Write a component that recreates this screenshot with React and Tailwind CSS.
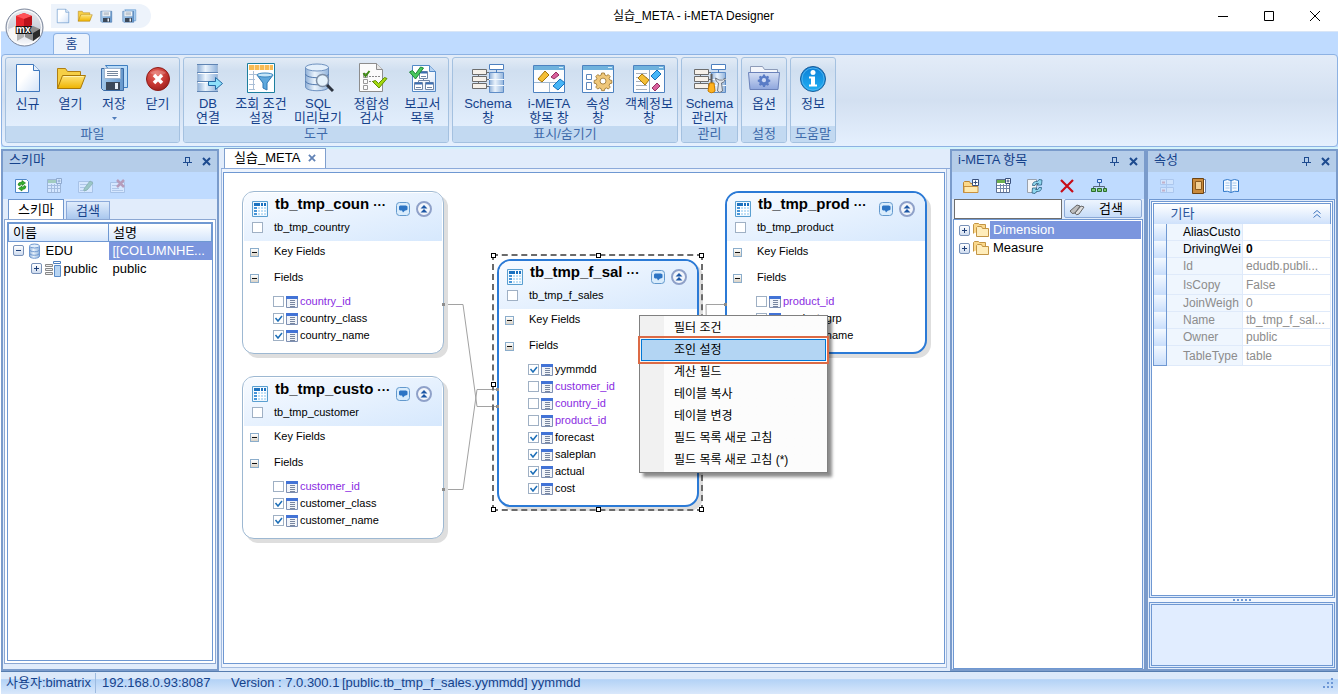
import React from 'react';

/* ---------- shared icon pieces ---------- */

function Svg({ size = 16, box, className = '', children }) {
  return (
    <svg width={size} height={size} viewBox={box || `0 0 ${size} ${size}`} className={`shrink-0 ${className}`} fill="none" aria-hidden="true">
      {children}
    </svg>
  );
}

function Gradients() {
  return (
    <svg width="0" height="0" className="absolute" aria-hidden="true">
      <defs>
        <linearGradient id="paper" x1="0" y1="0" x2="1" y2="1">
          <stop offset="0.4" stopColor="#ffffff" />
          <stop offset="1" stopColor="#d3e3f8" />
        </linearGradient>
        <linearGradient id="folder" x1="0" y1="0" x2="0" y2="1">
          <stop offset="0" stopColor="#ffe57a" />
          <stop offset="1" stopColor="#eeb300" />
        </linearGradient>
        <linearGradient id="disk" x1="0" y1="0" x2="1" y2="0">
          <stop offset="0" stopColor="#a4c9ea" />
          <stop offset="1" stopColor="#6496cb" />
        </linearGradient>
        <linearGradient id="cyl" x1="0" y1="0" x2="1" y2="0">
          <stop offset="0" stopColor="#8fb0d8" />
          <stop offset="0.4" stopColor="#eaf3fc" />
          <stop offset="1" stopColor="#92b4dc" />
        </linearGradient>
        <radialGradient id="red" cx="0.4" cy="0.3" r="0.8">
          <stop offset="0" stopColor="#e8695e" />
          <stop offset="0.6" stopColor="#c23430" />
          <stop offset="1" stopColor="#8e1c19" />
        </radialGradient>
        <linearGradient id="info" x1="0" y1="0" x2="0" y2="1">
          <stop offset="0" stopColor="#0d7ed6" />
          <stop offset="1" stopColor="#1fb1f5" />
        </linearGradient>
        <linearGradient id="optFolder" x1="0" y1="0" x2="0" y2="1">
          <stop offset="0" stopColor="#d5dff4" />
          <stop offset="1" stopColor="#8ea6dd" />
        </linearGradient>
        <linearGradient id="orb" x1="0" y1="0" x2="0" y2="1">
          <stop offset="0" stopColor="#e9ebef" />
          <stop offset="0.5" stopColor="#cdd2dc" />
          <stop offset="1" stopColor="#fbfcff" />
        </linearGradient>
      </defs>
    </svg>
  );
}

const GEAR = 'M-1.6-9h3.2l.6 2.4 1.9.8 2.1-1.3 2.3 2.3-1.3 2.1.8 1.9 2.4.6v3.2l-2.4.6-.8 1.9 1.3 2.1-2.3 2.3-2.1-1.3-1.9.8-.6 2.4h-3.2l-.6-2.4-1.9-.8-2.1 1.3-2.3-2.3 1.3-2.1-.8-1.9-2.4-.6v-3.2l2.4-.6.8-1.9-1.3-2.1 2.3-2.3 2.1 1.3 1.9-.8z';

/* ---------- ribbon icons, 32 x 32 ---------- */

const NewIcon = ({ size = 32 }) => (
  <Svg size={size} box="0 0 32 32">
    <path d="M4.500 2.500h17l6 6v21h-23z" fill="url(#paper)" stroke="#3f78bd" />
    <path d="M21.500 2.500v6h6" fill="#e4effc" stroke="#3f78bd" />
  </Svg>
);

const OpenIcon = ({ size = 32 }) => (
  <Svg size={size} box="0 0 32 32">
    <path d="M2.500 26.500v-20h8l2 3h13v5" fill="#f6cf45" stroke="#b07f14" />
    <path d="M2.500 26.500l5-13h23l-5 13z" fill="url(#folder)" stroke="#a87808" />
    <path d="M8.500 14.500h20" stroke="#fff3b0" />
  </Svg>
);

const SaveIcon = ({ size = 32, stacked = true }) => (
  <Svg size={size} box="0 0 32 32">
    {stacked && <path d="M7.500 3.500h22v22h-4z" fill="#b9dbf8" stroke="#3f7fc1" />}
    <path d="M3.500 6.500h22v22h-20l-2-2z" fill="url(#disk)" stroke="#3a6aa5" />
    <path d="M6.500 6.500h16v10h-16z" fill="#fff" stroke="#9db4cf" />
    <path d="M9 9.500h11M9 11.500h11M9 13.500h11" stroke="#76889d" />
    <path d="M8 20h14v8H8z" fill="#3c4858" />
    <path d="M17 21h3v6h-3z" fill="#e9f0f8" />
  </Svg>
);

const CloseIcon = () => (
  <Svg size={32}>
    <circle cx="16" cy="17" r="11.500" fill="url(#red)" stroke="#8f1c18" />
    <path d="M8 11a10 7 0 0 1 16 0q-8 5-16 0z" fill="#fff" opacity=".22" />
    <path d="M12 13l8 8M20 13l-8 8" stroke="#fff" strokeWidth="3.500" />
  </Svg>
);

const DbLinkIcon = () => (
  <Svg size={32}>
    <path d="M5.500 2.500h20v27h-20z" fill="url(#cyl)" stroke="#a5bbd6" />
    <path d="M5 10.500h21M5 19.500h21M5 29.500h21M5 2.500h21" stroke="#5f84b3" />
    <path d="M6 11.500h20M6 20.500h20" stroke="#fff" />
    <path d="M16.500 19.500h7v-4l7 6-7 6v-4h-7z" fill="#8ee0fa" stroke="#256aa5" />
  </Svg>
);

const FilterIcon = () => (
  <Svg size={32}>
    <path d="M2.500 1.500h27v29h-27z" fill="#fff" stroke="#1c7f9e" />
    <path d="M4 3h24v5H4z" fill="#f7bb55" />
    <path d="M9.500 3v5M14.500 3v5M19.500 3v5M24.500 3v5" stroke="#fbe2b4" />
    <path d="M8.500 9v19M4 12.500h8M4 17.500h6M4 22.500h6M4 27.500h6" stroke="#a9bed6" />
    <path d="M12 13h16l-6 8v7l-4-2v-5z" fill="#5fa8dc" stroke="#2f78b4" />
    <ellipse cx="20" cy="13" rx="8" ry="2" fill="#c6e6f8" stroke="#3a86bf" />
  </Svg>
);

const SqlIcon = () => (
  <Svg size={32}>
    <path d="M3.500 5v20c0 5 23 5 23 0V5" fill="url(#cyl)" stroke="#6f92c0" />
    <ellipse cx="15" cy="5.500" rx="11.500" ry="3.500" fill="#e3effb" stroke="#6f92c0" />
    <path d="M3.500 12c0 5 23 5 23 0M3.500 19c0 5 23 5 23 0" stroke="#5279ae" />
    <circle cx="20.500" cy="18.500" r="6" fill="#e5f2fc" stroke="#7e8fa5" strokeWidth="1.500" />
    <path d="M25 23l6 6" stroke="#2d3440" strokeWidth="3" />
  </Svg>
);

const CheckDocIcon = () => (
  <Svg size={32}>
    <path d="M3.500 1.500h17l6 6v22h-23z" fill="#fbfbfb" stroke="#8d8d8d" />
    <path d="M20.500 1.500v6h6" fill="#e6e6e6" stroke="#8d8d8d" />
    <path d="M7.500 11.500h4v4h-4zM7.500 17.500h4v4h-4zM7.500 23.500h4v4h-4z" stroke="#999" />
    <path d="M13 14.500h11M13 19.500h6" stroke="#888" strokeDasharray="2 1" />
    <path d="M7.500 11l2 3 4-5" stroke="#3f8a14" strokeWidth="2" />
    <path d="M16.500 19.500l3-1 3 3 6-6 2.500 1-8 9.500z" fill="#a4d80f" stroke="#5d8f00" />
  </Svg>
);

const ReportIcon = () => (
  <Svg size={32}>
    <path d="M5.500 3.500h17l6 6v20h-23z" fill="url(#paper)" stroke="#5289c7" />
    <path d="M22.500 3.500v6h6" fill="#b5d2f2" stroke="#5289c7" />
    <path d="M12.500 9.500h8v7h-8zM7.500 20.500h8v7h-8zM18.500 20.500h8v7h-8z" fill="#fff" stroke="#6f86a6" />
    <path d="M13 10.500h7M8 21.500h7M19 21.500h7" stroke="#3c6eb1" strokeWidth="2" />
    <path d="M16.500 17v2M11.500 20v-1.500h11V20M14 14.500h5M9 25.500h5M20 25.500h5" stroke="#6f86a6" />
    <path d="M2.500 10l3-1.500L8.500 12l5-7 3 1-8 11z" fill="#48c75d" stroke="#1d8635" />
  </Svg>
);

function SchemaShape() {
  return (
    <>
      <path d="M18.500 10.500h14v20h-14z" fill="url(#cyl)" stroke="#5f8dc7" />
      <path d="M18 17.500h15M18 23.500h15" stroke="#f4faff" />
      <path d="M18.500 2.500h14v5h-14z" fill="#fff" stroke="#4c7fbf" />
      <path d="M25.500 8v3" stroke="#4c7fbf" />
      <path d="M1.500 7.500h14v5h-14zM1.500 14.500h14v5h-14zM1.500 21.500h14v5h-14z" fill="#f6f1ea" stroke="#6d6d6d" />
      <path d="M7.500 13v1M7.500 20v1M16 10.500h2M16 17.500h2M16 24.500h2" stroke="#6d6d6d" />
    </>
  );
}

const SchemaIcon = () => (
  <svg width="34" height="32" viewBox="0 0 34 32" fill="none" aria-hidden="true"><SchemaShape /></svg>
);

const SchemaToolsIcon = () => (
  <svg width="34" height="32" viewBox="0 0 34 32" fill="none" aria-hidden="true">
    <SchemaShape />
    <path d="M18.500 12v9" stroke="#5e5e5e" strokeWidth="2" />
    <path d="M16.500 21h4.500l1 8q-3.500 3.500-7 0z" fill="#ffb21e" stroke="#c77b00" />
    <path d="M22.500 16q0 4 3 5l-1 8q2 3 5 0l-1-8q4-1 3.500-5l-2.500 2h-3.500z" fill="#e2e5ea" stroke="#6b7480" />
  </svg>
);

function WindowShape() {
  return (
    <>
      <path d="M.500 3.500h31v27H.500z" fill="#fdfdfe" stroke="#4d82c0" />
      <path d="M1 4h30v4H1z" fill="#6fb2dd" />
      <path d="M26 5.500h4" stroke="#d8ecfb" />
    </>
  );
}

const ItemsIcon = () => (
  <Svg size={32}>
    <WindowShape />
    <path d="M1 20.500h30M16.500 21v9" stroke="#9eb6cf" />
    <path d="M5 17l7-8 4 4-7 7z" fill="#f5bf35" stroke="#a3750c" />
    <path d="M18 15l5-5 3 3-5 4z" fill="#d85f9c" stroke="#923262" />
    <path d="M20 24l7-7 5 4-7 7z" fill="#46b5f7" stroke="#1571ba" />
  </Svg>
);

const PropsIcon = () => (
  <Svg size={32}>
    <WindowShape />
    <path d="M4.500 12.500h5v5h-5zM4.500 20.500h5v7h-5z" fill="#fff" stroke="#5d86ba" />
    <g transform="translate(21 19.500) scale(.85)">
      <path d={GEAR} transform="translate(0 -1)" fill="#efc77a" stroke="#9c7632" />
      <circle r="3.500" cy="-.500" fill="#fff" stroke="#9c7632" />
    </g>
  </Svg>
);

const ObjectIcon = () => (
  <Svg size={32}>
    <WindowShape />
    <path d="M16.500 8v22" stroke="#8fa9c4" />
    <path d="M3 11.500h11M3 15.500h11M3 19.500h11M3 23.500h11M3 27.500h11" stroke="#a8b0ba" />
    <path d="M5 16l4-4 7 6-4 5z" fill="#f5bf35" stroke="#a3750c" />
    <path d="M18 14l6-6 4 4-6 6z" fill="#46b5f7" stroke="#1571ba" />
    <path d="M19 26l5-5 3 3-5 5z" fill="#d85f9c" stroke="#923262" />
  </Svg>
);

const OptionIcon = () => (
  <Svg size={32}>
    <path d="M2.500 27V4.500h12l2 3h13V27" fill="#f4f6fb" stroke="#8d9bb8" />
    <path d="M.500 10.500h31l-1.500 17H2z" fill="url(#optFolder)" stroke="#6b82ba" />
    <g transform="translate(16 18.500) scale(.6)">
      <path d={GEAR} transform="translate(0 -1)" fill="#5a7cc6" />
      <circle r="3.500" cy="-.500" fill="#cfdbf5" />
    </g>
  </Svg>
);

const InfoIcon = () => (
  <Svg size={32}>
    <circle cx="16" cy="17" r="12.500" fill="url(#info)" stroke="#1a5c99" />
    <circle cx="16" cy="17" r="11" stroke="#4fb2ee" />
    <circle cx="16" cy="10.500" r="2.500" fill="#fff" />
    <path d="M12 14.500h6v8h2v2h-8v-2h2v-6h-2z" fill="#fff" />
  </Svg>
);

/* ---------- small icons ---------- */

const PinIcon = () => (
  <Svg size={9}>
    <path d="M2.500 0v5M1.500.500h5M6 0v5M0 5.500h9M4.500 6v3" stroke="#1e4b8f" shapeRendering="crispEdges" />
  </Svg>
);

const CrossIcon = ({ color = '#1e4b8f', size = 9 }) => (
  <Svg size={size} box="0 0 9 9">
    <path d="M1 1l7 7M8 1L1 8" stroke={color} strokeWidth="2" />
  </Svg>
);

const RefreshIcon = () => (
  <Svg>
    <path d="M1.500 1.500h11l2 2v11h-13z" fill="#fff" stroke="#4f87c9" />
    <path d="M4 7q0-3 4-3l0-1.500L11.500 5 8 7.500V6Q6 6 6 8z" fill="#35b22e" stroke="#167512" strokeWidth=".600" />
    <path d="M12 8.500q0 3-4 3V13l-3.500-2.500L8 8v1.500q2 0 2-2z" fill="#35b22e" stroke="#167512" strokeWidth=".600" />
  </Svg>
);

const CalcIcon = () => (
  <Svg>
    <path d="M1.500 1.500h13v13h-13z" fill="#fff" stroke="#5c6f90" />
    <path d="M2 2h8v3H2z" fill="#6bae4e" />
    <path d="M2 7.500h12M2 10.500h12M5.500 6v8M8.500 6v8M11.500 6v8" stroke="#7488ab" />
    <path d="M10.500.500h5v5h-5z" fill="#fff" stroke="#39507c" />
    <path d="M11.500 3h3M13 1.500v3" stroke="#39507c" />
  </Svg>
);

const EditIcon = () => (
  <Svg>
    <path d="M.500 3.500h14v11H.500z" fill="#fff" stroke="#7b94bc" />
    <path d="M2 6.500h11M2 9.500h5M2 12.500h4" stroke="#92a4c2" />
    <path d="M6 11l6-8 3 2-6 7-3 1z" fill="#58a35f" stroke="#2f6e37" />
  </Svg>
);

const DeleteRowIcon = () => (
  <Svg>
    <path d="M.500 4.500h14v10H.500z" fill="#fff" stroke="#7b94bc" />
    <path d="M2 7.500h5M2 10.500h7M2 12.500h11" stroke="#92a4c2" />
    <path d="M7 2l7 7M14 2L7 9" stroke="#a52a3e" strokeWidth="2.500" />
  </Svg>
);

const FolderIcon = ({ plus = false }) => (
  <Svg>
    <path d="M.500 14.500v-10l1-1h5l1 2h7v9z" fill="#fbd88a" stroke="#b88434" />
    <path d="M1 8.500h14v6H1z" fill="#ffe9ad" stroke="#c8913f" />
    {plus && <path d="M9.500 1.500h6v6h-6z" fill="#fff" stroke="#39507c" />}
    {plus && <path d="M10.500 4.500h4M12.500 2.500v4" stroke="#39507c" />}
  </Svg>
);

const TreeFolderIcon = () => (
  <Svg>
    <path d="M.500 11.500v-9l1-1h4l1 1h6v4" fill="#fbd88a" stroke="#c39545" />
    <path d="M3.500 14.500v-9l1-1h4l1 2h6v8z" fill="#ffedbb" stroke="#c39545" />
  </Svg>
);

const SyncDocIcon = () => (
  <Svg>
    <path d="M.500 1.500h9v13h-9z" fill="#f4f5f7" stroke="#9aa2ae" />
    <path d="M5.500 7.500Q5.500 3 10.500 3.500L12 1.500l3 .500-.500 5H10l1.500-1.500Q8.500 4.500 8 7.500z" fill="#8fd6ee" stroke="#2b5f80" strokeWidth=".800" />
    <path d="M14.500 9.500Q14.500 14 9.500 13.500L8 15.500l-3-.500.500-5H10l-1.500 1.500q3 1 3.500-2z" fill="#8fd6ee" stroke="#2b5f80" strokeWidth=".800" />
  </Svg>
);

const RedXIcon = () => (
  <Svg>
    <path d="M2 2l12 12M14 2L2 14" stroke="#c80d18" strokeWidth="2.200" />
  </Svg>
);

const HierarchyIcon = () => (
  <Svg>
    <path d="M8.500 5v3M2.500 10.500v-2h11v2" stroke="#56667e" />
    <path d="M6.500 1.500h4v3h-4z" fill="#dce9fb" stroke="#285dae" />
    <path d="M.500 10.500h4v3h-4zM6.500 10.500h4v3h-4zM12.500 10.500h3v3h-3z" fill="#7cc473" stroke="#2a6e2a" />
  </Svg>
);

const CategoryIcon = () => (
  <Svg>
    <path d="M1.500 1.500h13v5h-13zM1.500 9.500h13v5h-13zM7.500 2v12" fill="#eef3fb" stroke="#8ba4cf" />
    <path d="M3 4.500h3M3 12.500h3" stroke="#c66" strokeWidth="2" />
  </Svg>
);

const BrownBookIcon = () => (
  <Svg>
    <path d="M12 1.500h2.500v13H12z" fill="#fff" stroke="#6a7fa8" />
    <path d="M1.500.500h11v15h-11z" fill="#c98a3c" stroke="#6e4311" />
    <path d="M4.500 3.500h6v8h-6z" fill="#f1cf95" stroke="#8b5a1e" />
  </Svg>
);

const OpenBookIcon = () => (
  <Svg>
    <path d="M.500 2.500q4-2 7.500 0 3.500-2 7.500 0v11q-4-1-7.500 1-3.500-2-7.500-1z" fill="#f3f9ff" stroke="#2f77c9" />
    <path d="M8 3v11" stroke="#2f77c9" />
    <path d="M2.500 5h4M2.500 7.500h4M2.500 10h4M9.500 5h4M9.500 7.500h4M9.500 10h4" stroke="#a8c8ea" />
  </Svg>
);

const BinocularsIcon = () => (
  <Svg>
    <path d="M1 10l7-6 3 1-5 7q-3 2-5-2z" fill="#bdbdbd" stroke="#666" />
    <path d="M6 12l6-7 3 1-5 7q-3 2-4-1z" fill="#dedede" stroke="#666" />
  </Svg>
);

const DbIcon = () => (
  <Svg>
    <path d="M2.500 3v10c0 3 10 3 10 0V3" fill="url(#cyl)" stroke="#6f98cf" />
    <ellipse cx="7.500" cy="3" rx="5" ry="2" fill="#e3effb" stroke="#6f98cf" />
    <path d="M2.500 6.500c0 3 10 3 10 0M2.500 10c0 3 10 3 10 0" stroke="#6f98cf" />
  </Svg>
);

const SmallSchemaIcon = () => (
  <Svg>
    <path d="M9.500 4.500h6v11h-6z" fill="#b8d5f3" stroke="#5b8cc8" />
    <path d="M8.500.500h7v2h-7z" fill="#fff" stroke="#4c7fbf" />
    <path d="M.500 3.500h7v2h-7zM.500 7.500h7v2h-7zM.500 11.500h7v2h-7z" fill="#eee" stroke="#888" />
  </Svg>
);

const TableIcon = () => (
  <Svg>
    <path d="M.500.500h15v15H.500z" fill="#eef7fe" stroke="#5a9fd0" />
    <path d="M2 2h12v3H2z" fill="#1c72c0" />
    <path d="M2 5h3v9H2z" fill="#4795d8" />
    <path d="M5 6h9v8H5z" fill="#bfe0f7" />
    <path d="M2 5.500h12M2 8.500h12M2 11.500h12M5.500 5v9M8.500 2v12M11.500 2v12" stroke="#fff" />
  </Svg>
);

const FieldIcon = () => (
  <Svg size={12}>
    <path d="M.500.500h11v11H.500z" fill="#f1f4f9" stroke="#7e90b3" />
    <path d="M0 0h12v3H0z" fill="#4273d6" />
    <path d="M4 4.500h5M4 6.500h5M4 8.500h5M4 10.500h5" stroke="#7886a0" shapeRendering="crispEdges" />
  </Svg>
);

const CommentIcon = () => (
  <Svg size={14}>
    <rect x=".500" y=".500" width="13" height="13" rx="3" fill="#d9ecfc" stroke="#6399cd" />
    <path d="M4 3.500h6l1.500 1v3l-1.500 1H9l-2 2-1-2H4l-1-1v-3z" fill="#2c74c4" />
  </Svg>
);

const FoldIcon = () => (
  <Svg size={16}>
    <circle cx="8" cy="8" r="7" fill="#f3f6fb" stroke="#8fa1c9" strokeWidth="2" />
    <path d="M4.500 7.500L8 4l3.500 3.500zM4.500 11.500L8 8l3.500 3.500z" fill="#1d57a5" />
  </Svg>
);

const AppLogo = () => (
  <svg width="39" height="39" viewBox="0 0 39 39" fill="none" className="shrink-0" aria-hidden="true">
    <circle cx="19.500" cy="19.500" r="18.500" fill="url(#orb)" stroke="#7c879c" />
    <circle cx="19.500" cy="19.500" r="17" stroke="#fff" />
    <path d="M11 8l8-3 8 3v9l-8 4-8-3z" fill="#e8262c" />
    <path d="M11 8l8-3 8 3-8 3z" fill="#ff5257" />
    <path d="M19 11l8-3v9l-8 4z" fill="#b9121a" />
    <path d="M4 21l7-3 8 4v7l-7 4-8-4z" fill="#f7f7f7" />
    <path d="M12 25l7-3v7l-7 4z" fill="#b3b3b3" />
    <path d="M20 22l8-4 7 3v7l-7 5-8-4z" fill="#8d8d8d" />
    <path d="M28 25l7-4v7l-7 5z" fill="#2b2b2b" />
    <text x="11" y="25" fontSize="10" fontWeight="700" fill="#fff" stroke="#111" strokeWidth="2" paintOrder="stroke" fontFamily="Liberation Sans, sans-serif">mx</text>
  </svg>
);

/* ---------- data ---------- */

const RIBBON = [
  {
    title: '파일',
    items: [
      { icon: <NewIcon />, lines: ['신규'], width: 'w-[43px]' },
      { icon: <OpenIcon />, lines: ['열기'], width: 'w-[43px]' },
      { icon: <SaveIcon />, lines: ['저장'], width: 'w-[44px]', menu: true },
      { icon: <CloseIcon />, lines: ['닫기'], width: 'w-[43px]' },
    ],
  },
  {
    title: '도구',
    items: [
      { icon: <DbLinkIcon />, lines: ['DB', '연결'], width: 'w-[48px]' },
      { icon: <FilterIcon />, lines: ['조회 조건', '설정'], width: 'w-[58px]' },
      { icon: <SqlIcon />, lines: ['SQL', '미리보기'], width: 'w-[56px]' },
      { icon: <CheckDocIcon />, lines: ['정합성', '검사'], width: 'w-[51px]' },
      { icon: <ReportIcon />, lines: ['보고서', '목록'], width: 'w-[51px]' },
    ],
  },
  {
    title: '표시/숨기기',
    items: [
      { icon: <SchemaIcon />, lines: ['Schema', '창'], width: 'w-[70px]' },
      { icon: <ItemsIcon />, lines: ['i-META', '항목 창'], width: 'w-[52px]' },
      { icon: <PropsIcon />, lines: ['속성', '창'], width: 'w-[46px]' },
      { icon: <ObjectIcon />, lines: ['객체정보', '창'], width: 'w-[56px]' },
    ],
  },
  { title: '관리', items: [{ icon: <SchemaToolsIcon />, lines: ['Schema', '관리자'], width: 'w-[55px]' }] },
  { title: '설정', items: [{ icon: <OptionIcon />, lines: ['옵션'], width: 'w-[44px]' }] },
  { title: '도움말', items: [{ icon: <InfoIcon />, lines: ['정보'], width: 'w-[44px]' }] },
];

const NODES = [
  {
    title: 'tb_tmp_coun',
    table: 'tb_tmp_country',
    place: 'left-[18px] top-[18px]',
    fields: [
      { name: 'country_id', key: true },
      { name: 'country_class' },
      { name: 'country_name' },
    ],
  },
  {
    title: 'tb_tmp_custo',
    table: 'tb_tmp_customer',
    place: 'left-[18px] top-[203px]',
    fields: [
      { name: 'customer_id', key: true },
      { name: 'customer_class' },
      { name: 'customer_name' },
    ],
  },
  {
    title: 'tb_tmp_prod',
    table: 'tb_tmp_product',
    place: 'left-[501px] top-[18px]',
    active: true,
    fields: [
      { name: 'product_id', key: true },
      { name: 'product_grp' },
      { name: 'product_name' },
    ],
  },
  {
    title: 'tb_tmp_f_sal',
    table: 'tb_tmp_f_sales',
    place: 'left-[273px] top-[86px]',
    active: true,
    fields: [
      { name: 'yymmdd' },
      { name: 'customer_id', key: true },
      { name: 'country_id', key: true },
      { name: 'product_id', key: true },
      { name: 'forecast' },
      { name: 'saleplan' },
      { name: 'actual' },
      { name: 'cost' },
    ],
  },
];

const HANDLES = [
  'left-[-3px] top-[-3px]',
  'left-[102px] top-[-3px]',
  'right-[-3px] top-[-3px]',
  'left-[-3px] top-[126px]',
  'left-[-3px] bottom-[-3px]',
  'left-[102px] bottom-[-3px]',
  'right-[-3px] bottom-[-3px]',
];

const MENU = ['필터 조건', '조인 설정', '계산 필드', '테이블 복사', '테이블 변경', '필드 목록 새로 고침', '필드 목록 새로 고침 (*)'];

const PROPERTIES = [
  { name: 'AliasCusto', value: '', editable: true },
  { name: 'DrivingWei', value: '0', editable: true },
  { name: 'Id', value: 'edudb.publi...' },
  { name: 'IsCopy', value: 'False', tall: true },
  { name: 'JoinWeigh', value: '0' },
  { name: 'Name', value: 'tb_tmp_f_sal...' },
  { name: 'Owner', value: 'public' },
  { name: 'TableType', value: 'table', tall: true },
];

/* ---------- window chrome ---------- */

function TitleBar() {
  return (
    <header className="flex h-[31px] shrink-0 items-center bg-white">
      <div className="flex w-[150px] items-center">
        <div className="relative z-10 h-6 w-[50px]">
          <div className="absolute top-1 left-1"><AppLogo /></div>
        </div>
        <div className="flex h-6 items-center gap-1 rounded-r-full bg-[#edf3fb] pr-3 pl-1">
          <button aria-label="신규" className="w-[18px]"><NewIcon size={16} /></button>
          <button aria-label="열기" className="w-[18px]"><OpenIcon size={16} /></button>
          <button aria-label="저장" className="w-[18px]"><SaveIcon size={16} stacked={false} /></button>
          <button aria-label="모두 저장" className="w-[18px]"><SaveIcon size={16} /></button>
        </div>
      </div>
      <h1 className="flex-1 pl-9 text-center text-xs text-black">실습_META - i-META Designer</h1>
      <div className="flex w-[138px] items-center text-black">
        <button aria-label="최소화" className="flex w-[46px] justify-center">
          <Svg size={10}><path d="M0 5.500h10" stroke="currentColor" /></Svg>
        </button>
        <button aria-label="최대화" className="flex w-[46px] justify-center">
          <Svg size={10}><path d="M.500.500h9v9h-9z" stroke="currentColor" /></Svg>
        </button>
        <button aria-label="닫기" className="flex w-[46px] justify-center">
          <Svg size={10}><path d="M0 0l10 10M10 0L0 10" stroke="currentColor" /></Svg>
        </button>
      </div>
    </header>
  );
}

function RibbonButton({ icon, lines, width, menu }) {
  return (
    <button className={`flex flex-col items-center pt-1 text-[13px] leading-[14px] whitespace-nowrap text-[#15428b] ${width}`}>
      <span className="mb-[3px] flex h-8 items-center">{icon}</span>
      {lines.map((line) => <span key={line}>{line}</span>)}
      {menu && <span className="flex h-[14px] items-center"><Svg size={5}><path d="M0 1h5L2.500 4z" fill="#4f7cba" /></Svg></span>}
    </button>
  );
}

function Ribbon() {
  return (
    <nav className="shrink-0 bg-[#bfdbff]">
      <div className="flex h-[23px] items-end border-t border-[#d9e6f7] pl-[52px]">
        <button className="h-[21px] w-[37px] rounded-t border border-b-0 border-[#8db2e3] bg-[#ecf3fc] text-[13px] leading-[18px] text-[#15428b]">홈</button>
      </div>
      <div className="flex gap-[3px] rounded border border-[#8db2e3] bg-linear-to-b from-[#e3ecf8] via-[#d3e0f1] to-[#e5f0fe] px-[3px] pt-0.5 pb-[3px]">
        {RIBBON.map((group) => (
          <section key={group.title} className="flex h-[86px] flex-col overflow-hidden rounded-[3px] border border-[#a4c1e0] bg-linear-to-b from-[#e2ebf6] from-0% via-[#d0dff0] via-15% to-[#e3effd] to-85%">
            <div className="flex flex-1">
              {group.items.map((item) => <RibbonButton key={item.lines.join()} {...item} />)}
            </div>
            <h2 className="h-4 bg-[#c2d9f1] text-center text-[13px] leading-4 whitespace-nowrap text-[#3e6aaa]">{group.title}</h2>
          </section>
        ))}
      </div>
      <div className="h-0.5 bg-[#d3f3fb]" />
    </nav>
  );
}

function PanelHeader({ title }) {
  return (
    <div className="flex h-[21px] shrink-0 items-center gap-2.5 bg-[#b5cde9] px-1.5">
      <h2 className="flex-1 pb-1 text-[13px] leading-4 text-[#15428b]">{title}</h2>
      <button aria-label="고정"><PinIcon /></button>
      <button aria-label="닫기"><CrossIcon /></button>
    </div>
  );
}

function Toolbar({ icons }) {
  return (
    <div className="flex h-[27px] shrink-0 items-center gap-4 bg-[#bfdbff] pl-[11px]">
      {icons.map(({ label, icon, off }) => (
        <button key={label} aria-label={label} disabled={off} className={off ? 'opacity-35' : ''}>{icon}</button>
      ))}
    </div>
  );
}

function Expander({ open }) {
  return (
    <button aria-label={open ? '접기' : '펼치기'} className="flex size-[11px] shrink-0 items-center justify-center rounded-[2px] border border-[#7891b8] bg-linear-to-b from-white to-[#cfdcef]">
      <Svg size={7}><path d={open ? 'M1 3.500h5' : 'M1 3.500h5M3.500 1v5'} stroke="#1f3f77" /></Svg>
    </button>
  );
}

/* ---------- left panel ---------- */

function SchemaPanel() {
  return (
    <aside className="flex w-[218px] shrink-0 flex-col border-2 border-[#7a9bcb] bg-[#e1ecfb]">
      <PanelHeader title="스키마" />
      <Toolbar
        icons={[
          { label: '새로 고침', icon: <RefreshIcon /> },
          { label: '추가', icon: <CalcIcon />, off: true },
          { label: '편집', icon: <EditIcon />, off: true },
          { label: '삭제', icon: <DeleteRowIcon />, off: true },
        ]}
      />
      <div className="flex h-5 shrink-0 items-end gap-0.5 pl-[5px] text-[13px]">
        <button className="h-5 w-14 border border-b-0 border-[#6f96cd] bg-white leading-4 text-black">스키마</button>
        <button className="h-[18px] w-11 border border-b-0 border-[#8caada] bg-linear-to-b from-[#e0ecfb] to-[#a9c7ee] leading-4 text-[#15428b]">검색</button>
      </div>
      <div className="mx-px mb-[5px] flex-1 border border-[#8ba7d3] bg-white p-0.5">
        <div className="h-full border border-[#6f98d2] bg-white">
          <table className="w-full table-fixed border-collapse text-[13px] leading-4 text-black">
            <thead>
              <tr className="h-[18px] bg-linear-to-b from-white to-[#d3e4fb]">
                <th className="w-[100px] border border-[#6f98d2] pl-1 text-left font-normal">이름</th>
                <th className="border border-[#6f98d2] pl-1 text-left font-normal">설명</th>
              </tr>
            </thead>
            <tbody>
              <tr className="h-[18px]">
                <td className="pl-1"><span className="flex items-center gap-[3px]"><Expander open /><DbIcon />EDU</span></td>
                <td className="bg-[#7b96de] pl-1 whitespace-nowrap text-white">[[COLUMNHE...</td>
              </tr>
              <tr className="h-[18px]">
                <td className="pl-[22px]"><span className="flex items-center gap-[3px]"><Expander /><SmallSchemaIcon />public</span></td>
                <td className="pl-1">public</td>
              </tr>
            </tbody>
          </table>
        </div>
      </div>
    </aside>
  );
}

/* ---------- canvas ---------- */

function CheckBox({ checked = false, label }) {
  return (
    <span className="grid size-[11px] shrink-0">
      <input type="checkbox" aria-label={label} defaultChecked={checked} className="peer size-[11px] appearance-none border border-[#9fb0c4] bg-white [grid-area:1/1]" />
      <span className="pointer-events-none hidden [grid-area:1/1] peer-checked:block">
        <Svg size={11}><path d="M2.500 5l2.500 3 4-5" stroke="#1d6fb8" strokeWidth="1.500" /></Svg>
      </span>
    </span>
  );
}

function FoldButton({ label }) {
  return (
    <button aria-label={label} className="mt-0.5 flex size-[9px] shrink-0 items-center justify-center border border-[#8badcb] bg-linear-to-b from-white to-[#d9d2c6]">
      <Svg size={5}><path d="M0 2.500h5" stroke="#111" /></Svg>
    </button>
  );
}

function TableNode({ title, table, place, active, fields }) {
  return (
    <article className={`absolute w-[202px] overflow-hidden bg-white text-[11px] text-black shadow-[4px_4px_0_#dedede] ${active ? 'rounded-[14px] border-2 border-[#2b7ad6]' : 'rounded-[12px] border border-[#9db8d2] p-px'} ${place}`}>
      <div className="h-12 bg-linear-to-br from-[#f8fbff] to-[#d6e8fd] pt-[3px] pr-2.5 pl-2">
        <div className="flex h-[25px] items-center">
          <TableIcon />
          <h3 className="flex flex-1 items-baseline gap-1 pb-2.5 pl-[7px] text-[15px] leading-[18px] font-bold whitespace-nowrap">
            {title}<span className="text-[13px] leading-[14px]">···</span>
          </h3>
          <button aria-label="설명"><CommentIcon /></button>
          <button aria-label="접기" className="ml-1.5"><FoldIcon /></button>
        </div>
        <label className="flex h-[13px] items-center gap-[11px]"><CheckBox />{table}</label>
      </div>
      <div className="flex h-[21px] items-center gap-[15px] pl-1.5"><FoldButton label="Key Fields" />Key Fields</div>
      <div className="flex h-[31px] items-center gap-[15px] pl-1.5"><FoldButton label="Fields" />Fields</div>
      <ul className="pb-2 pl-[29px]">
        {fields.map((field) => (
          <li key={field.name} className="h-[17px]">
            <label className={`flex h-[17px] items-center gap-0.5 ${field.key ? 'text-[#8a2be2]' : ''}`}>
              <CheckBox checked={!field.key} />
              <FieldIcon />
              {field.name}
            </label>
          </li>
        ))}
      </ul>
    </article>
  );
}

function ContextMenu() {
  return (
    <ul className="absolute top-[142px] left-[415px] w-[189px] border border-[#808080] bg-linear-to-r from-[#f1f1f1] from-[24px] to-[#fcfcfc] to-[24px] py-px text-xs text-black shadow-[4px_4px_3px_rgba(0,0,0,0.45)]">
      {MENU.map((item, i) => (
        <li key={item} className="h-[22px]">
          {i === 1 ? (
            <button className="mx-px h-[22px] w-[185px] border border-[#0078d7] bg-[#b3d5f3] pl-8 text-left outline-2 outline-offset-1 outline-[#dc6a45]">{item}</button>
          ) : (
            <button className="h-[22px] w-full pl-[34px] text-left">{item}</button>
          )}
        </li>
      ))}
    </ul>
  );
}

function Designer() {
  return (
    <main className="flex min-w-0 flex-1 flex-col bg-[#e1ecfb] pl-0.5">
      <div className="flex h-5 shrink-0 items-end border-b border-[#8caada] pl-[3px]">
        <div className="flex h-5 w-[102px] items-center gap-2 border border-b-0 border-[#7f9fce] bg-white pb-0.5 pl-[9px] text-[13px] leading-4 text-black">
          실습_META
          <button aria-label="탭 닫기"><CrossIcon size={8} color="#6182b5" /></button>
        </div>
      </div>
      <div className="mr-[3px] mb-[3px] flex-1 border border-t-0 border-[#a3bbdf] bg-[#eef4fd] px-px py-[3px]">
        <div className="relative h-full overflow-hidden border border-[#6f98d2] bg-white">
          <svg className="absolute top-0 left-0" width="720" height="490" fill="none" stroke="#a2a2a2" aria-hidden="true">
            <path d="M219 131.500h20L253 233.500h20M219 316.500h20L253 216.500h20M501 131.500h-19L483 200" />
          </svg>
          {NODES.map((node) => <TableNode key={node.title} {...node} />)}
          <svg className="pointer-events-none absolute top-0 left-0" width="720" height="490" fill="#8d8d8d" aria-hidden="true">
            <path d="M218 130h3v3h-3zM218 315h3v3h-3zM272 215h3v3h-3zM272 232h3v3h-3zM500 130h3v3h-3z" />
          </svg>
          <div className="pointer-events-none absolute top-[81px] left-[268px] h-[257px] w-[211px] border-2 border-dashed border-[#6b6b6b]">
            {HANDLES.map((place) => <span key={place} className={`absolute size-[5px] border border-black bg-white ${place}`} />)}
          </div>
          <ContextMenu />
        </div>
      </div>
    </main>
  );
}

/* ---------- right panels ---------- */

function ItemsPanel() {
  return (
    <aside className="flex w-[198px] shrink-0 flex-col border-y-2 border-r-4 border-l-2 border-[#7a9bcb] bg-[#e1ecfb]">
      <PanelHeader title="i-META 항목" />
      <Toolbar
        icons={[
          { label: '폴더 추가', icon: <FolderIcon plus /> },
          { label: '항목 추가', icon: <CalcIcon /> },
          { label: '새로 고침', icon: <SyncDocIcon /> },
          { label: '삭제', icon: <RedXIcon /> },
          { label: '계층', icon: <HierarchyIcon /> },
        ]}
      />
      <form className="flex h-5 shrink-0 gap-0.5 px-0.5" onSubmit={(e) => e.preventDefault()}>
        <input aria-label="검색어" className="h-5 min-w-0 flex-1 border border-[#6e6e6e] bg-white px-1 text-[13px] text-black" />
        <button className="flex h-[19px] w-[78px] items-center gap-[14px] rounded-[2px] border border-[#8ba9d6] bg-linear-to-b from-[#eef5fe] to-[#c6dcf8] pl-1 text-[13px] leading-4 text-black">
          <BinocularsIcon />검색
        </button>
      </form>
      <ul className="mx-px flex-1 border border-[#6f98d2] bg-white pt-px pr-px pl-[5px] text-[13px] leading-[18px] text-black">
        <li className="flex items-center gap-[3px]">
          <Expander /><TreeFolderIcon />
          <span className="-ml-0.5 flex-1 bg-[#7b96de] pl-[3px] text-white">Dimension</span>
        </li>
        <li className="flex items-center gap-[3px]">
          <Expander /><TreeFolderIcon />
          <span className="-ml-0.5 flex-1 pl-[3px]">Measure</span>
        </li>
      </ul>
    </aside>
  );
}

function PropertyPanel() {
  return (
    <aside className="flex w-[190px] shrink-0 flex-col border-y-2 border-r-2 border-[#7a9bcb] bg-[#e1ecfb]">
      <PanelHeader title="속성" />
      <Toolbar
        icons={[
          { label: '범주', icon: <CategoryIcon />, off: true },
          { label: '속성 페이지', icon: <BrownBookIcon /> },
          { label: '도움말', icon: <OpenBookIcon /> },
        ]}
      />
      <div className="mx-px flex-1 border border-[#6f98d2] p-px">
        <div className="h-full border border-[#6f98d2] bg-white p-px">
          <table className="w-full table-fixed border-collapse border border-[#6f98d2] text-xs leading-4 text-[#8c8c8c]">
            <thead>
              <tr className="h-5 bg-linear-to-b from-white to-[#cfe1fb] text-[#2a559b]">
                <th className="w-[13px]" />
                <th className="w-[76px] pl-1 text-left text-[13px] font-normal">기타</th>
                <th className="pr-2">
                  <button aria-label="접기" className="ml-auto block">
                    <Svg size={10}><path d="M1.500 4.500L5 1.500l3.500 3M1.500 8.500L5 5.500l3.500 3" stroke="#3e74be" /></Svg>
                  </button>
                </th>
              </tr>
            </thead>
            <tbody>
              {PROPERTIES.map(({ name, value, editable, tall }) => (
                <tr key={name} className={`${tall ? 'h-5' : 'h-[17px]'} ${editable ? 'text-black' : ''}`}>
                  <td className="border-r border-[#6f98d2] bg-linear-to-b from-[#f4f9ff] to-[#c9defb]" />
                  <th className="border-b border-[#dfeafa] bg-[#eff6fe] pl-4 text-left font-normal whitespace-nowrap">{name}</th>
                  <td className={`border border-t-0 border-[#dfeafa] pl-[3px] whitespace-nowrap ${editable ? 'font-bold' : ''}`}>{value}</td>
                </tr>
              ))}
            </tbody>
          </table>
        </div>
      </div>
      <div className="flex h-1 shrink-0 items-center justify-center gap-0.5 bg-[#f2f7fe]">
        {[0, 1, 2, 3, 4].map((dot) => <span key={dot} className="size-0.5 bg-[#6f98d2]" />)}
      </div>
      <div className="mx-px mb-px h-[66px] shrink-0 border border-[#6f98d2] p-px">
        <div className="h-full border border-[#6f98d2] bg-[#e1edff]" />
      </div>
    </aside>
  );
}

function StatusBar() {
  return (
    <footer className="flex h-[23px] shrink-0 items-center border-t border-[#567db0] bg-linear-to-b from-[#dce9fa] from-30% via-[#b3d2f6] via-35% to-[#d9e8fb] text-[13px] whitespace-nowrap text-[#15428b]">
      <span className="w-[95px] border-r border-[#9dbbe0] pl-[5px]">사용자:bimatrix</span>
      <span className="w-[135px] pl-1.5">192.168.0.93:8087</span>
      <span className="w-[111px]">Version : 7.0.300.1</span>
      <span className="flex-1">[public.tb_tmp_f_sales.yymmdd] yymmdd</span>
      <Svg size={12} className="mr-1"><path d="M9 1h2v2H9zM5 5h2v2H5zM9 5h2v2H9zM1 9h2v2H1zM5 9h2v2H5zM9 9h2v2H9z" fill="#6d97d6" /></Svg>
    </footer>
  );
}

export default function App() {
  return (
    <div className="flex h-screen w-full flex-col overflow-hidden bg-white px-px pb-px font-['Liberation_Sans','Noto_Sans_CJK_KR',sans-serif]">
      <Gradients />
      <TitleBar />
      <Ribbon />
      <div className="flex min-h-0 flex-1 bg-[#e1ecfb]">
        <SchemaPanel />
        <Designer />
        <ItemsPanel />
        <PropertyPanel />
      </div>
      <StatusBar />
    </div>
  );
}
